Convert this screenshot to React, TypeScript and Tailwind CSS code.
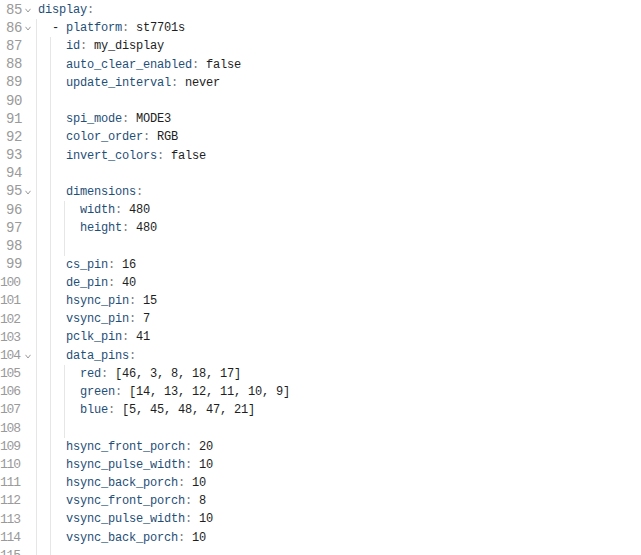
import React from "react";

type Line = {
  n: number;
  level: number;
  dash?: boolean;
  k?: string;
  v?: string;
  fold?: boolean;
};

const lines: Line[] = [
  { n: 85, level: 0, k: "display", fold: true },
  { n: 86, level: 1, dash: true, k: "platform", v: "st7701s", fold: true },
  { n: 87, level: 2, k: "id", v: "my_display" },
  { n: 88, level: 2, k: "auto_clear_enabled", v: "false" },
  { n: 89, level: 2, k: "update_interval", v: "never" },
  { n: 90, level: 2 },
  { n: 91, level: 2, k: "spi_mode", v: "MODE3" },
  { n: 92, level: 2, k: "color_order", v: "RGB" },
  { n: 93, level: 2, k: "invert_colors", v: "false" },
  { n: 94, level: 2 },
  { n: 95, level: 2, k: "dimensions", fold: true },
  { n: 96, level: 3, k: "width", v: "480" },
  { n: 97, level: 3, k: "height", v: "480" },
  { n: 98, level: 3 },
  { n: 99, level: 2, k: "cs_pin", v: "16" },
  { n: 100, level: 2, k: "de_pin", v: "40" },
  { n: 101, level: 2, k: "hsync_pin", v: "15" },
  { n: 102, level: 2, k: "vsync_pin", v: "7" },
  { n: 103, level: 2, k: "pclk_pin", v: "41" },
  { n: 104, level: 2, k: "data_pins", fold: true },
  { n: 105, level: 3, k: "red", v: "[46, 3, 8, 18, 17]" },
  { n: 106, level: 3, k: "green", v: "[14, 13, 12, 11, 10, 9]" },
  { n: 107, level: 3, k: "blue", v: "[5, 45, 48, 47, 21]" },
  { n: 108, level: 3 },
  { n: 109, level: 2, k: "hsync_front_porch", v: "20" },
  { n: 110, level: 2, k: "hsync_pulse_width", v: "10" },
  { n: 111, level: 2, k: "hsync_back_porch", v: "10" },
  { n: 112, level: 2, k: "vsync_front_porch", v: "8" },
  { n: 113, level: 2, k: "vsync_pulse_width", v: "10" },
  { n: 114, level: 2, k: "vsync_back_porch", v: "10" },
  { n: 115, level: 2 },
];

function Fold() {
  return (
    <svg width="6" height="5" viewBox="0 0 6 5" className="mt-[7px]">
      <path d="M0.5 0.8 L3 4 L5.5 0.8" fill="none" stroke="#9a9a9a" strokeWidth="1" />
    </svg>
  );
}

function Row({ line }: { line: Line }) {
  const guides = Array.from({ length: line.level });
  return (
    <div className="flex h-[18.2px] items-stretch">
      <div className="flex w-[36px] shrink-0">
        <div
          className={
            line.n >= 100
              ? "flex w-[22px] shrink-0 items-center justify-end pr-[2px] text-[13px] tracking-[-1.1px] text-[#9a9a9a]"
              : "flex w-[22px] shrink-0 items-center justify-end text-[14px] tracking-[-0.4px] text-[#9a9a9a]"
          }
        >
          {line.n}
        </div>
        <div className="ml-[2px] flex w-[7px] justify-center">{line.fold && <Fold />}</div>
      </div>
      {guides.map((_, i) => (
        <span key={i} className="w-[14px] shrink-0 border-l border-[#e6e6e6]" />
      ))}
      <div className="flex items-center whitespace-pre pl-[2px] text-[12px] tracking-[-0.2px]">
        {line.dash && <span className="text-[#222]">- </span>}
        {line.k && <span className="text-[#1f4f77]">{line.k}</span>}
        {line.k && <span className="text-[#808080]">:</span>}
        {line.v && <span className="text-[#1e1e1e]"> {line.v}</span>}
      </div>
    </div>
  );
}

export default function App() {
  return (
    <div
      className="h-[555px] w-[641px] overflow-hidden bg-white pt-[1px]"
      style={{ fontFamily: '"Liberation Mono", "DejaVu Sans Mono", monospace' }}
    >
      {lines.map((l) => (
        <Row key={l.n} line={l} />
      ))}
    </div>
  );
}
